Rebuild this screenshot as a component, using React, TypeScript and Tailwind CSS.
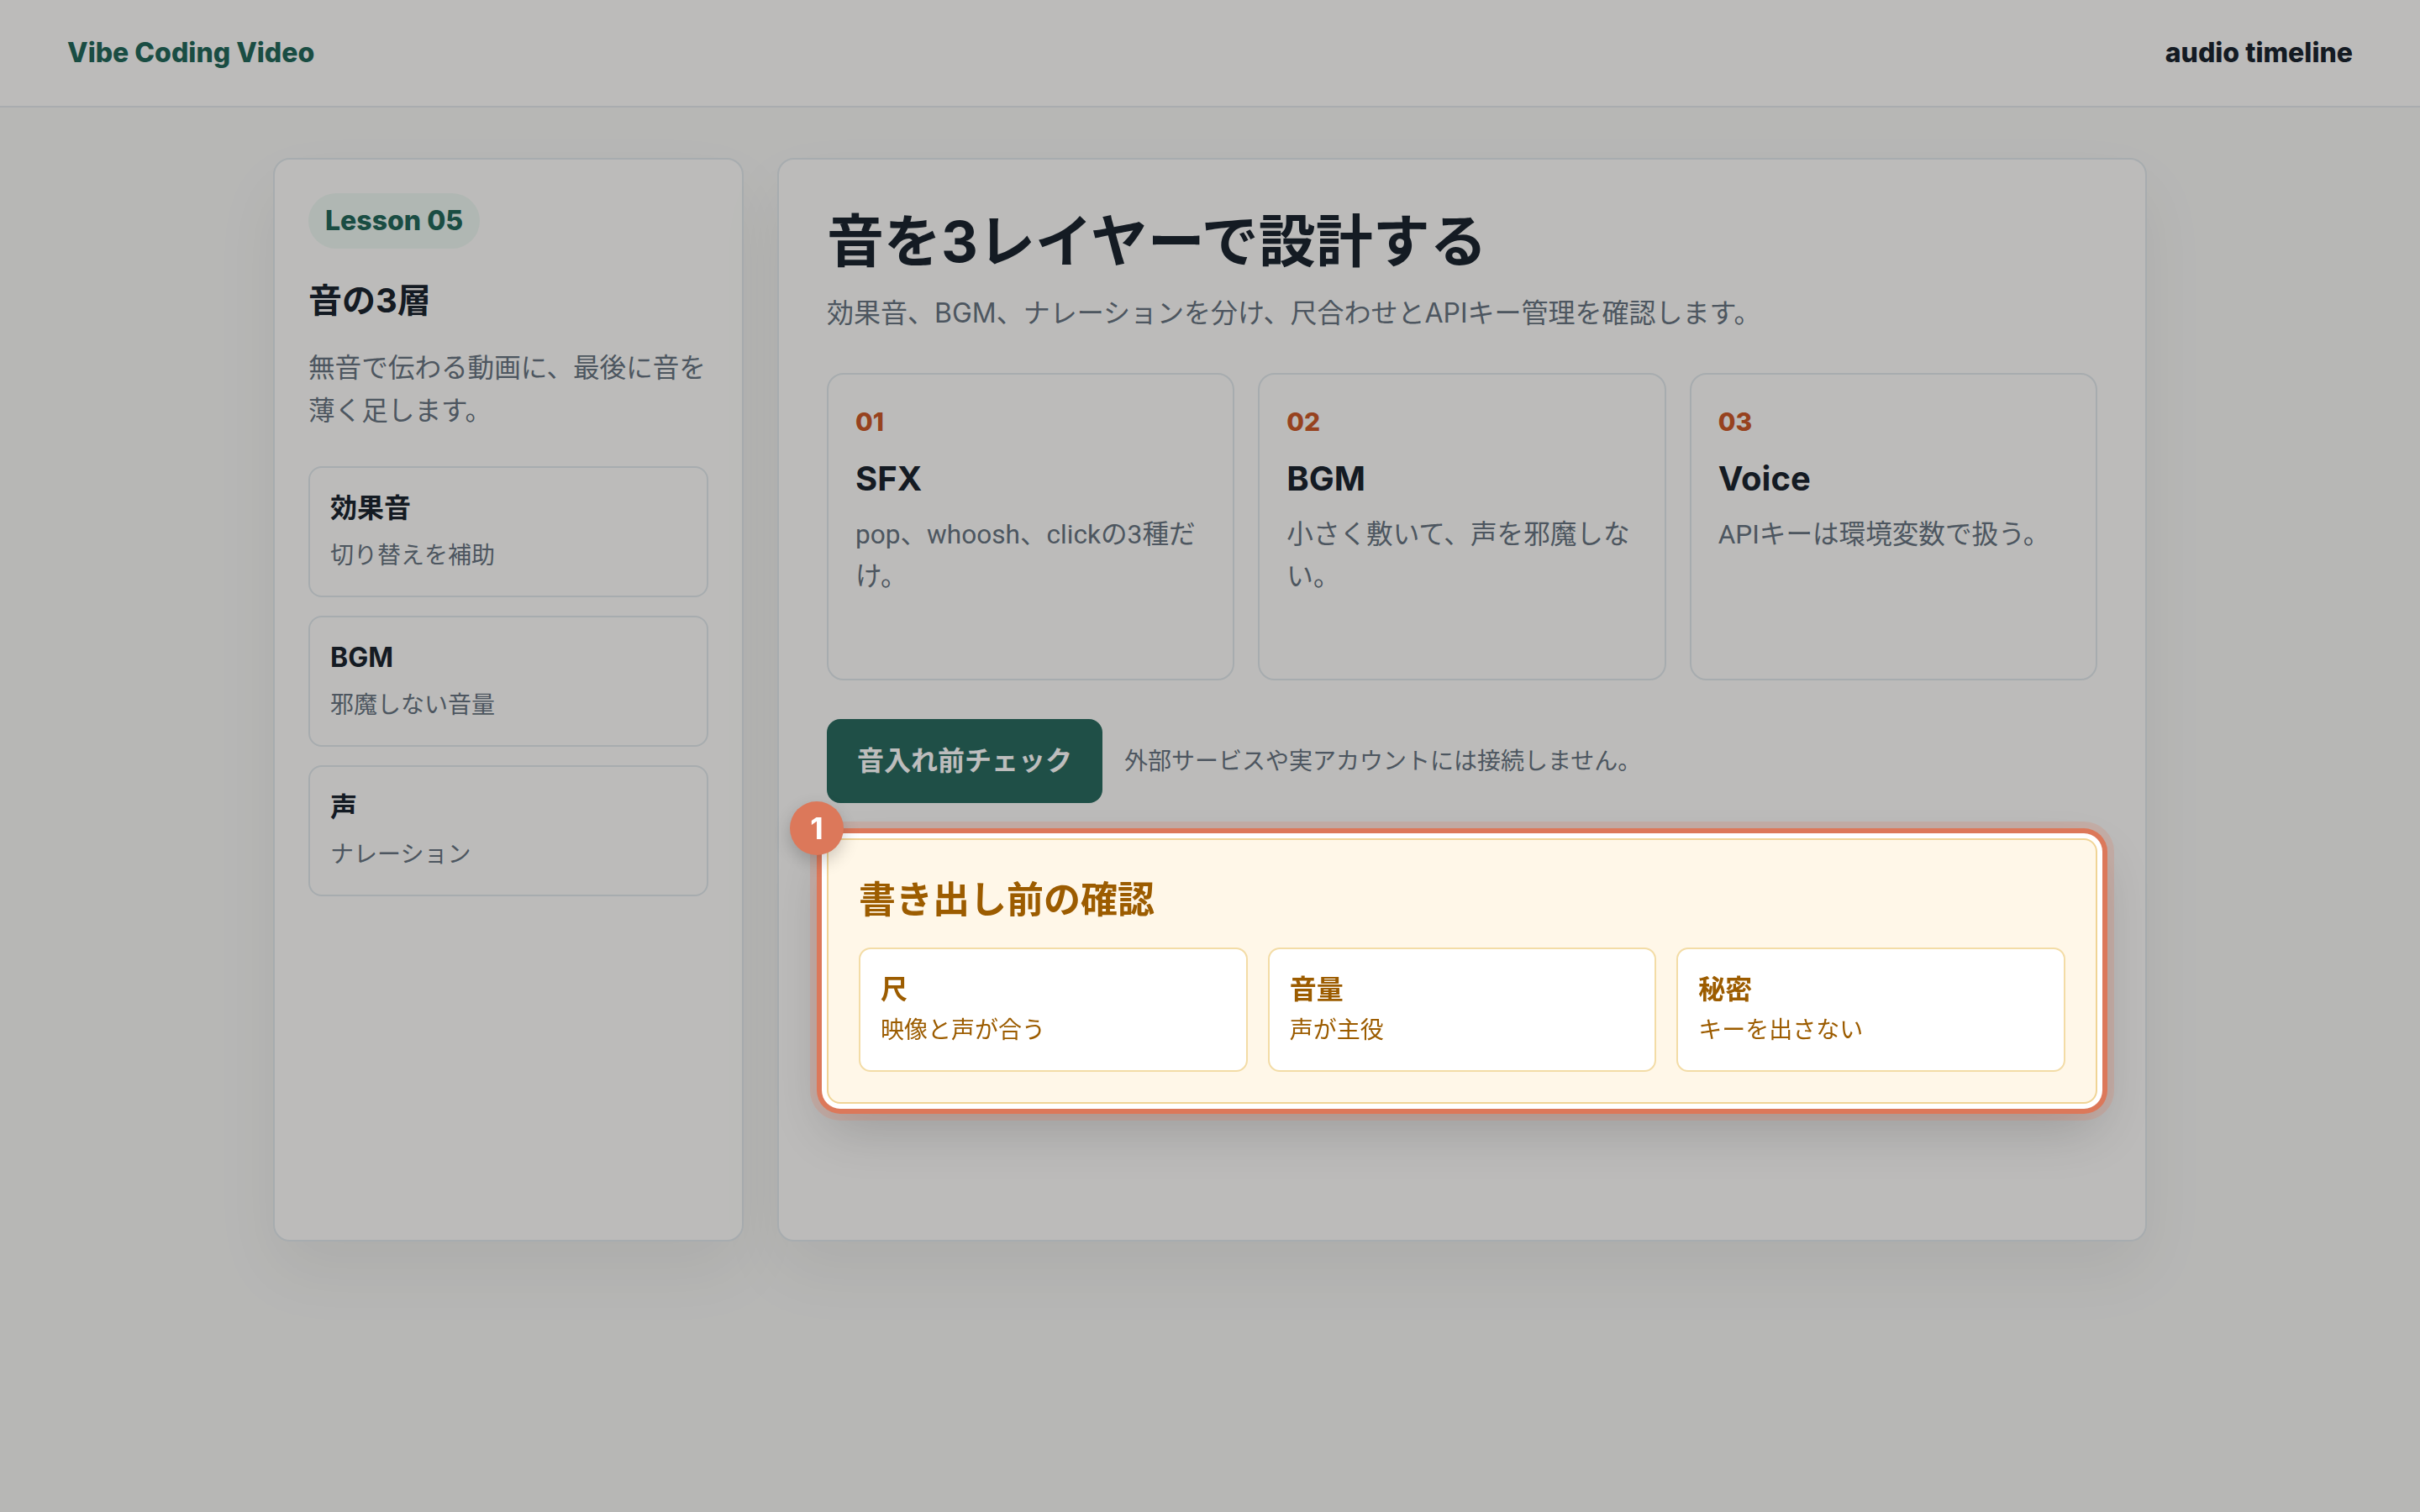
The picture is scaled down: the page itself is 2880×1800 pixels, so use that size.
export default function App() {
  const layers = [
    { no: "01", title: "SFX", desc: "pop、whoosh、clickの3種だけ。" },
    { no: "02", title: "BGM", desc: "小さく敷いて、声を邪魔しない。" },
    { no: "03", title: "Voice", desc: "APIキーは環境変数で扱う。" },
  ];
  const side = [
    { t: "効果音", s: "切り替えを補助" },
    { t: "BGM", s: "邪魔しない音量" },
    { t: "声", s: "ナレーション" },
  ];
  const checks = [
    { t: "尺", s: "映像と声が合う" },
    { t: "音量", s: "声が主役" },
    { t: "秘密", s: "キーを出さない" },
  ];
  return (
    <div className="relative min-h-screen bg-[#f7f7f5] font-[Inter,'Noto_Sans_CJK_JP',sans-serif] text-[#1b2530]">
      <header className="flex h-[128px] items-center justify-between border-b-2 border-[#e4e9ec] bg-[#fefdfb] px-[80px]">
        <span className="text-[32px] font-extrabold text-[#24695b]">Vibe Coding Video</span>
        <span className="text-[32px] font-extrabold text-[#1b2530]">audio timeline</span>
      </header>

      <main className="mx-auto grid min-h-[1350px] w-[2230px] grid-cols-[560px_1fr] gap-[40px] pt-[60px]">
        <aside className="rounded-[20px] border-2 border-[#e2e8ec] bg-[#fefdfb] p-[40px] shadow-[0_36px_80px_rgba(0,0,0,0.06)]">
          <span className="inline-flex h-[66px] items-center rounded-full bg-[#eef7f2] px-[20px] text-[32px] font-extrabold text-[#24695b]">
            Lesson 05
          </span>
          <h2 className="mt-[34px] text-[40px] font-bold leading-[56px]">音の3層</h2>
          <p className="mt-[26px] text-[31.6px] leading-[51.4px] text-[#687582]">
            無音で伝わる動画に、最後に音を薄く足します。
          </p>
          <div className="mt-[40px] flex flex-col gap-[22px]">
            {side.map((c) => (
              <div key={c.t} className="rounded-[16px] border-2 border-[#e2e8ec] p-[24px]">
                <div className="text-[32px] font-bold leading-[48px]">{c.t}</div>
                <div className="mt-[8px] text-[28px] leading-[48px] text-[#687582]">{c.s}</div>
              </div>
            ))}
          </div>
        </aside>

        <section className="rounded-[20px] border-2 border-[#e2e8ec] bg-[#fefdfb] p-[57px] shadow-[0_36px_80px_rgba(0,0,0,0.06)]">
          <h1 className="text-[68px] font-bold leading-[80px]">音を3レイヤーで設計する</h1>
          <p className="mt-[22px] text-[32px] leading-[48px] text-[#687582]">
            効果音、BGM、ナレーションを分け、尺合わせとAPIキー管理を確認します。
          </p>
          <div className="mt-[47px] grid grid-cols-3 gap-[28px]">
            {layers.map((l) => (
              <div key={l.no} className="h-[366px] rounded-[20px] border-2 border-[#e2e8ec] p-[32px]">
                <div className="text-[30px] font-extrabold leading-[48px] text-[#cc5a2a]">{l.no}</div>
                <div className="mt-[16px] text-[40px] font-bold leading-[56px]">{l.title}</div>
                <div className="mt-[14px] font-[Roboto,'Noto_Sans_CJK_JP',sans-serif] text-[31.6px] leading-[50px] text-[#687582]">
                  {l.desc}
                </div>
              </div>
            ))}
          </div>

          <div className="mt-[46px] flex items-center gap-[26px]">
            <button className="rounded-[16px] bg-[#2a6b60] px-[36px] py-[26px] text-[32px] font-bold leading-[48px] text-white">
              音入れ前チェック
            </button>
            <span className="text-[28px] text-[#687582]">外部サービスや実アカウントには接続しません。</span>
          </div>

          <div className="relative z-20 mt-[42px] rounded-[16px] border-2 border-[#f0d496] bg-[#fff7e8] p-[36px] shadow-[0_0_0_6px_#ffffff,0_0_0_12px_#dc785a,0_0_0_20px_rgba(220,120,90,0.22),0_28px_64px_rgba(0,0,0,0.18)]">
            <span className="absolute -left-[46px] -top-[46px] flex h-[64px] w-[64px] items-center justify-center rounded-full bg-[#dc785a] text-[36px] font-bold text-white shadow-[0_8px_20px_rgba(0,0,0,0.2)]">
              1
            </span>
            <h3 className="text-[44px] font-bold leading-[70px] text-[#9c5c00]">書き出し前の確認</h3>
            <div className="mt-[22px] grid grid-cols-3 gap-[24px]">
              {checks.map((c) => (
                <div key={c.t} className="rounded-[14px] border-2 border-[#f3dca6] bg-white p-[24px]">
                  <div className="text-[32px] font-bold leading-[48px] text-[#9c5c00]">{c.t}</div>
                  <div className="text-[28px] leading-[48px] text-[#9c5c00]">{c.s}</div>
                </div>
              ))}
            </div>
          </div>
        </section>
      </main>

      <div className="fixed inset-0 z-10 bg-black/[0.26]" />
    </div>
  );
}
